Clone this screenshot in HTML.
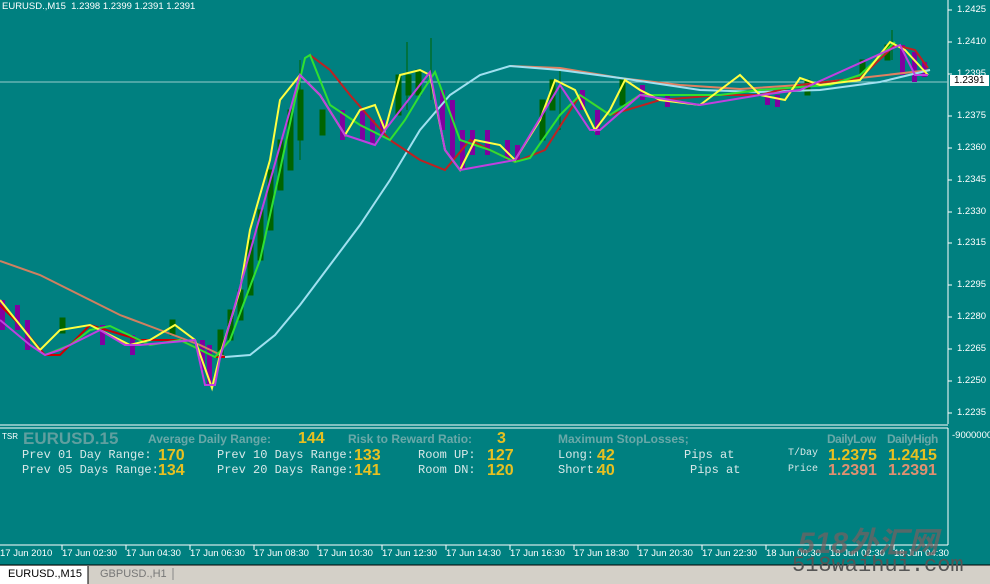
<!DOCTYPE html>
<html><head><meta charset="utf-8"><style>
body{margin:0;width:990px;height:584px;overflow:hidden;background:#008080;font-family:"Liberation Sans",sans-serif;position:relative}
.t{position:absolute;white-space:nowrap}
.g{color:#6aa8a8;font-weight:bold;font-size:12px}
.m{font-family:"Liberation Mono",monospace;font-size:12px;color:#d8e8e8}
.y{color:#e8c020;font-weight:bold;font-size:16px}
.s{color:#e09070;font-weight:bold;font-size:16px}
.ax{font-size:9.5px;color:#fff}
</style></head><body>
<svg width="990" height="584" style="position:absolute;left:0;top:0">
<line x1="948" y1="0" x2="948" y2="424" stroke="#fff"/>
<line x1="0" y1="82" x2="948" y2="82" stroke="#9cc" stroke-width="1"/>
<g stroke="#006400" fill="#006400" stroke-width="1">
<rect x="218" y="330" width="5" height="25"/><rect x="228" y="310" width="5" height="30"/><rect x="238" y="290" width="5" height="30"/><rect x="248" y="240" width="5" height="55"/><rect x="258" y="210" width="5" height="50"/><rect x="268" y="170" width="5" height="60"/><rect x="278" y="140" width="5" height="50"/><rect x="288" y="110" width="5" height="60"/><rect x="298" y="90" width="5" height="50"/><rect x="320" y="110" width="5" height="25"/>
<rect x="396" y="75" width="5" height="40"/><rect x="406" y="75" width="5" height="20"/><rect x="416" y="70" width="5" height="25"/><rect x="540" y="100" width="5" height="40"/><rect x="550" y="80" width="5" height="30"/><rect x="620" y="80" width="5" height="25"/><rect x="60" y="318" width="5" height="15"/><rect x="170" y="320" width="5" height="15"/><rect x="805" y="80" width="5" height="15"/><rect x="860" y="60" width="5" height="15"/><rect x="885" y="45" width="5" height="15"/>
<line x1="300" y1="60" x2="300" y2="160"/><line x1="407" y1="42" x2="407" y2="110"/><line x1="431" y1="38" x2="431" y2="100"/><line x1="560" y1="70" x2="560" y2="130"/><line x1="892" y1="30" x2="892" y2="60"/>
</g>
<g fill="#8000a0">
<rect x="0" y="300" width="5" height="30"/><rect x="15" y="305" width="5" height="25"/><rect x="25" y="320" width="5" height="30"/><rect x="100" y="325" width="5" height="20"/><rect x="130" y="335" width="5" height="20"/><rect x="200" y="340" width="5" height="30"/><rect x="207" y="345" width="5" height="40"/>
<rect x="340" y="110" width="5" height="30"/><rect x="360" y="110" width="5" height="30"/><rect x="370" y="120" width="5" height="25"/><rect x="380" y="120" width="5" height="15"/><rect x="440" y="90" width="5" height="40"/><rect x="450" y="100" width="5" height="60"/><rect x="460" y="130" width="5" height="40"/><rect x="470" y="130" width="5" height="25"/><rect x="485" y="130" width="5" height="25"/><rect x="505" y="140" width="5" height="20"/><rect x="515" y="145" width="5" height="15"/><rect x="580" y="90" width="5" height="20"/><rect x="595" y="110" width="5" height="25"/><rect x="640" y="85" width="5" height="15"/><rect x="665" y="95" width="5" height="12"/><rect x="765" y="90" width="5" height="15"/><rect x="775" y="95" width="5" height="12"/><rect x="900" y="45" width="5" height="30"/><rect x="912" y="52" width="5" height="30"/><rect x="922" y="62" width="5" height="15"/>
</g>
<polyline fill="none" stroke="#d08060" stroke-width="2" points="0,261 40,275 80,295 120,315 160,330 200,345 225,357"/>
<polyline fill="none" stroke="#e08060" stroke-width="2" points="510,66 560,68 620,78 680,85 740,89 800,85 860,78 930,70"/>
<polyline fill="none" stroke="#a0e0f0" stroke-width="2" points="225,357 250,355 275,335 300,305 330,265 360,225 390,180 420,130 450,95 480,75 510,66 560,70 620,78 700,90 760,92 820,90 880,82 930,70"/>
<polyline fill="none" stroke="#c00" stroke-width="2" points="0,305 20,325 45,355 60,355 90,325 140,340 180,340 215,357 225,357"/>
<polyline fill="none" stroke="#c02020" stroke-width="2" points="310,55 330,70 350,95 370,118 390,140 420,160 445,170 470,140 490,150 515,162 545,150 580,95 610,115 660,100 720,95 760,95 800,85 860,78 895,45 915,50 928,68"/>
<polyline fill="none" stroke="#30e030" stroke-width="2" points="45,355 70,345 90,330 110,326 150,345 180,340 215,357 230,340 260,260 280,170 295,100 305,58 310,55 330,105 360,125 390,140 405,120 420,95 435,72 460,140 490,150 515,162 530,158 560,115 580,95 610,115 640,95 680,95 720,95 760,90 800,87 830,85 860,75 895,42"/>
<polyline fill="none" stroke="#ffff40" stroke-width="2" points="0,300 40,350 60,330 90,325 130,345 150,340 175,325 195,340 212,388 220,355 240,290 250,230 270,160 280,100 300,75 320,95 345,135 360,110 375,105 385,130 400,75 420,70 430,75 445,150 460,170 475,140 500,145 515,160 540,120 555,80 575,90 595,130 610,110 625,80 640,90 660,100 700,105 740,75 760,95 785,100 800,78 820,85 860,80 890,42 905,50 928,75"/>
<polyline fill="none" stroke="#c040e0" stroke-width="2" points="0,320 30,345 45,355 60,350 100,330 125,345 140,345 195,340 205,385 215,385 220,358 300,75 320,95 345,135 360,140 375,145 385,130 430,72 445,150 460,170 515,160 560,85 590,130 600,130 640,95 700,105 760,95 800,90 900,45 915,75 928,75"/>
<line x1="0" y1="425" x2="948" y2="425" stroke="#fff"/><line x1="0" y1="428" x2="948" y2="428" stroke="#fff"/>
<line x1="948" y1="428" x2="948" y2="545" stroke="#fff"/>
<line x1="0" y1="545" x2="948" y2="545" stroke="#fff"/>
<g stroke="#fff"><line x1="62" y1="545" x2="62" y2="550"/><line x1="126" y1="545" x2="126" y2="550"/><line x1="190" y1="545" x2="190" y2="550"/><line x1="254" y1="545" x2="254" y2="550"/><line x1="318" y1="545" x2="318" y2="550"/><line x1="382" y1="545" x2="382" y2="550"/><line x1="446" y1="545" x2="446" y2="550"/><line x1="510" y1="545" x2="510" y2="550"/><line x1="574" y1="545" x2="574" y2="550"/><line x1="638" y1="545" x2="638" y2="550"/><line x1="702" y1="545" x2="702" y2="550"/><line x1="766" y1="545" x2="766" y2="550"/><line x1="830" y1="545" x2="830" y2="550"/><line x1="894" y1="545" x2="894" y2="550"/></g>
<g stroke="#fff"><line x1="948" y1="10" x2="952" y2="10"/><line x1="948" y1="42" x2="952" y2="42"/><line x1="948" y1="74" x2="952" y2="74"/><line x1="948" y1="116" x2="952" y2="116"/><line x1="948" y1="148" x2="952" y2="148"/><line x1="948" y1="180" x2="952" y2="180"/><line x1="948" y1="212" x2="952" y2="212"/><line x1="948" y1="243" x2="952" y2="243"/><line x1="948" y1="285" x2="952" y2="285"/><line x1="948" y1="317" x2="952" y2="317"/><line x1="948" y1="349" x2="952" y2="349"/><line x1="948" y1="381" x2="952" y2="381"/><line x1="948" y1="413" x2="952" y2="413"/></g>
<rect x="0" y="565" width="990" height="19" fill="#d4d0c8"/>
<line x1="0" y1="565" x2="990" y2="565" stroke="#000"/>
<rect x="0" y="566" width="88" height="18" fill="#fff"/>
<line x1="88" y1="566" x2="88" y2="584" stroke="#000"/>
<line x1="173" y1="568" x2="173" y2="580" stroke="#888"/>
</svg>
<div class="t ax" style="left:2px;top:1px;font-size:9.5px">EURUSD.,M15&nbsp; 1.2398 1.2399 1.2391 1.2391</div>
<div class="t ax" style="left:957px;top:4px">1.2425</div>
<div class="t ax" style="left:957px;top:36px">1.2410</div>
<div class="t ax" style="left:957px;top:68px">1.2395</div>
<div class="t" style="left:950px;top:75px;background:#fff;color:#000;font-size:10px;padding:0 4px">1.2391</div>
<div class="t ax" style="left:957px;top:110px">1.2375</div>
<div class="t ax" style="left:957px;top:142px">1.2360</div>
<div class="t ax" style="left:957px;top:174px">1.2345</div>
<div class="t ax" style="left:957px;top:206px">1.2330</div>
<div class="t ax" style="left:957px;top:237px">1.2315</div>
<div class="t ax" style="left:957px;top:279px">1.2295</div>
<div class="t ax" style="left:957px;top:311px">1.2280</div>
<div class="t ax" style="left:957px;top:343px">1.2265</div>
<div class="t ax" style="left:957px;top:375px">1.2250</div>
<div class="t ax" style="left:957px;top:407px">1.2235</div>
<div class="t ax" style="left:952px;top:430px">-9000000</div>
<div class="t ax" style="left:2px;top:432px;font-size:8px">TSR</div>
<div class="t" style="left:23px;top:429px;font-size:17px;font-weight:bold;color:#5f9f9f">EURUSD.15</div>
<div class="t g" style="left:148px;top:432px">Average Daily Range:</div>
<div class="t y" style="left:298px;top:430px">144</div>
<div class="t g" style="left:348px;top:432px">Risk to Reward Ratio:</div>
<div class="t y" style="left:497px;top:430px">3</div>
<div class="t g" style="left:558px;top:432px">Maximum StopLosses;</div>
<div class="t g" style="left:827px;top:432px;letter-spacing:-0.5px">DailyLow</div>
<div class="t g" style="left:887px;top:432px;letter-spacing:-0.5px">DailyHigh</div>
<div class="t m" style="left:22px;top:448px">Prev 01 Day Range:</div><div class="t y" style="left:158px;top:447px">170</div>
<div class="t m" style="left:22px;top:463px">Prev 05 Days Range:</div><div class="t y" style="left:158px;top:462px">134</div>
<div class="t m" style="left:217px;top:448px">Prev 10 Days Range:</div><div class="t y" style="left:354px;top:447px">133</div>
<div class="t m" style="left:217px;top:463px">Prev 20 Days Range:</div><div class="t y" style="left:354px;top:462px">141</div>
<div class="t m" style="left:418px;top:448px">Room UP:</div><div class="t y" style="left:487px;top:447px">127</div>
<div class="t m" style="left:418px;top:463px">Room DN:</div><div class="t y" style="left:487px;top:462px">120</div>
<div class="t m" style="left:558px;top:448px">Long:</div><div class="t y" style="left:597px;top:447px">42</div>
<div class="t m" style="left:558px;top:463px">Short:</div><div class="t y" style="left:597px;top:462px">40</div>
<div class="t m" style="left:684px;top:448px">Pips at</div>
<div class="t m" style="left:690px;top:463px">Pips at</div>
<div class="t m" style="left:788px;top:448px;font-size:10px">T/Day</div>
<div class="t m" style="left:788px;top:464px;font-size:10px">Price</div>
<div class="t y" style="left:828px;top:447px">1.2375</div><div class="t y" style="left:888px;top:447px">1.2415</div>
<div class="t s" style="left:828px;top:462px">1.2391</div><div class="t s" style="left:888px;top:462px">1.2391</div>
<div class="t ax" style="left:0px;top:548px">17 Jun 2010</div>
<div class="t ax" style="left:62px;top:548px">17 Jun 02:30</div>
<div class="t ax" style="left:126px;top:548px">17 Jun 04:30</div>
<div class="t ax" style="left:190px;top:548px">17 Jun 06:30</div>
<div class="t ax" style="left:254px;top:548px">17 Jun 08:30</div>
<div class="t ax" style="left:318px;top:548px">17 Jun 10:30</div>
<div class="t ax" style="left:382px;top:548px">17 Jun 12:30</div>
<div class="t ax" style="left:446px;top:548px">17 Jun 14:30</div>
<div class="t ax" style="left:510px;top:548px">17 Jun 16:30</div>
<div class="t ax" style="left:574px;top:548px">17 Jun 18:30</div>
<div class="t ax" style="left:638px;top:548px">17 Jun 20:30</div>
<div class="t ax" style="left:702px;top:548px">17 Jun 22:30</div>
<div class="t ax" style="left:766px;top:548px">18 Jun 00:30</div>
<div class="t ax" style="left:830px;top:548px">18 Jun 02:30</div>
<div class="t ax" style="left:894px;top:548px">18 Jun 04:30</div>
<div class="t" style="left:8px;top:568px;font-size:11px;color:#000">EURUSD.,M15</div>
<div class="t" style="left:100px;top:568px;font-size:11px;color:#777">GBPUSD.,H1</div>
<div class="t" style="left:798px;top:518px;font-size:30px;font-style:italic;font-weight:bold;color:#7a6060;opacity:.7;font-family:'Liberation Sans','Noto Sans CJK SC',sans-serif">518外汇网</div>
<div class="t" style="left:792px;top:553px;font-size:22px;font-family:'Liberation Mono',monospace;color:#555">518waihui.com</div>
</body></html>
